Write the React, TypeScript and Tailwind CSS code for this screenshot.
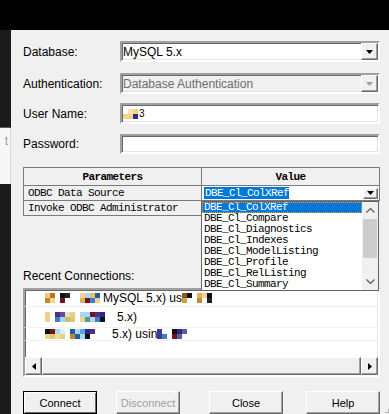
const mono = "font-['Liberation_Mono',monospace] text-[11px] tracking-[-0.6px]";

const sunken =
  "border-2 border-t-[#a0a0a0] border-l-[#a0a0a0] border-r-white border-b-white shadow-[inset_1px_1px_0_#696969,inset_-1px_-1px_0_#e3e3e3]";

const raised =
  "border border-t-white border-l-white border-r-[#696969] border-b-[#696969] shadow-[inset_-1px_-1px_0_#a0a0a0] bg-[#f0f0f0]";

function Triangle({ color = "#000", dir = "down" }: { color?: string; dir?: "down" | "left" | "right" }) {
  if (dir === "left")
    return (
      <svg width="4" height="7" viewBox="0 0 4 7">
        <path d="M4 0 L0 3.5 L4 7 Z" fill={color} />
      </svg>
    );
  if (dir === "right")
    return (
      <svg width="4" height="7" viewBox="0 0 4 7">
        <path d="M0 0 L4 3.5 L0 7 Z" fill={color} />
      </svg>
    );
  return (
    <svg width="7" height="4" viewBox="0 0 7 4">
      <path d="M0 0 H7 L3.5 4 Z" fill={color} />
    </svg>
  );
}

function ComboButton({ disabled }: { disabled?: boolean }) {
  return (
    <div className={`flex h-[17px] w-[17px] items-center justify-center ${raised}`}>
      <Triangle color={disabled ? "#a0a0a0" : "#000"} />
    </div>
  );
}

function Field({ label, children, className }: { label: string; children?: React.ReactNode; className: string }) {
  return (
    <div className={`flex items-center ${className}`}>
      <div className="w-[97px] shrink-0">{label}</div>
      {children}
    </div>
  );
}

// pixelated (blurred out) part of a connection name
function Mosaic({ cols }: { cols: string[][] }) {
  return (
    <span className="inline-flex">
      {cols.map((c, i) => (
        <span key={i} className="flex w-[5px] flex-col">
          {c.map((color, j) => (
            <span key={j} className="h-[5px] w-[5px]" style={{ background: color }} />
          ))}
        </span>
      ))}
    </span>
  );
}

const W = "#ffffff";

const row1a = [
  ["#f4c77c", "#c8852c"], ["#b7771f", "#f5d596"], [W, W], ["#111", "#7a1020"], ["#222", W], [W, W], [W, W],
  ["#f4d28a", "#e0b060"], ["#a8d8f0", "#7a1020"], ["#e2c46a", "#3a7fc8"], ["#1d5fa8", "#f2d18a"], [W, W],
];
const row1b = [["#8a5a2a", "#d3a13c"], ["#111", W], [W, W], ["#e1b060", "#c88a3a"], ["#f4d28a", W], ["#111", "#222"]];
const row2 = [
  ["#f2d18a", "#f2d18a"], [W, W], ["#5b2a86", "#3a7fc8"], ["#6a4a9a", "#a8d8f0"], ["#e8e0c0", "#c8c070"], ["#e8d080", "#d8c878"],
  [W, W], ["#a8d8f0", "#f4d28a"], ["#a8d8f0", "#4aa0a0"], ["#7a1020", "#a8d8f0"], ["#5b2a86", "#3a7fc8"], ["#2a2a8a", "#111"],
  [W, W], [W, W],
];
const row3 = [
  ["#111", "#f4d28a"], ["#7a1020", "#e2c46a"], ["#a8d8f0", "#f2e0a0"], ["#d8f0f8", "#e0d090"], [W, W], ["#1d5fa8", "#c8852c"],
  ["#a8d8f0", "#1d5fa8"], ["#5aa8d8", "#a8d8f0"], ["#2a2a8a", "#111"], ["#5b2a86", W], [W, W], [W, W], [W, W],
];
const row3b = [["#3a3a9a", "#3a3a9a"], [W, "#3a7fc8"], [W, W], ["#111", "#7a1020"], ["#2a2a8a", "#5b5ba0"], ["#5b5ba0", W]];

const dsn = [
  "DBE_Cl_ColXRef",
  "DBE_Cl_Compare",
  "DBE_Cl_Diagnostics",
  "DBE_Cl_Indexes",
  "DBE_Cl_ModelListing",
  "DBE_Cl_Profile",
  "DBE_Cl_RelListing",
  "DBE_Cl_Summary",
];

export default function App() {
  return (
    <div className="relative h-[414px] w-[389px] overflow-hidden bg-black font-['Liberation_Sans',Arial,sans-serif] text-[12px] leading-[14px] text-black">
      <div className="h-[30px] bg-black" />
      <div className="flex h-[384px]">
        {/* window behind the dialog */}
        <div className="flex w-[11px] shrink-0 flex-col">
          <div className="h-[97px] bg-[#1b1b1b]" />
          <div className="h-px bg-[#5a5a5a]" />
          <div className="h-[56px] overflow-hidden border-r border-[#d8d8d8] bg-[#f7f7f7] pt-[6px] pr-[2px] text-right text-[#9a9a9a]">
            t
          </div>
          <div className="flex-1 bg-[#1b1b1b]" />
        </div>

        <div className="relative flex-1 bg-[#f0f0f0] pl-[12px] pr-[10px]">
          <Field label="Database:" className="mt-[11px]">
            <div className={`flex h-[21px] flex-1 items-center bg-white pl-[1px] ${sunken}`}>
              <span className="flex-1">MySQL 5.x</span>
              <ComboButton />
            </div>
          </Field>
          <Field label="Authentication:" className="mt-[11px]">
            <div className={`flex h-[21px] flex-1 items-center bg-[#f0f0f0] pl-[1px] text-[#6d6d6d] ${sunken}`}>
              <span className="flex-1">Database Authentication</span>
              <ComboButton disabled />
            </div>
          </Field>
          <Field label="User Name:" className="mt-[9px]">
            <div className={`flex h-[21px] flex-1 items-center bg-white pl-[1px] ${sunken}`}>
              <Mosaic cols={[[W, "#f4d28a"], ["#fbe3a8", "#f4d28a"], ["#f4d28a", "#2a2a8a"]]} />
              <span className="ml-[1px] text-[10px]">3</span>
            </div>
          </Field>
          <Field label="Password:" className="mt-[10px]">
            <div className={`h-[20px] flex-1 bg-white ${sunken}`} />
          </Field>

          {/* parameter grid */}
          <div className={`mt-[13px] w-[357px] border-t border-l border-[#7a7a7a] ${mono}`}>
            <div className="flex h-[18px] font-bold">
              <div className="flex w-[178px] items-center justify-center border-r border-b border-[#7a7a7a]">Parameters</div>
              <div className="flex flex-1 items-center justify-center border-r border-b border-[#7a7a7a]">Value</div>
            </div>
            <div className="flex h-[15px]">
              <div className="flex w-[178px] items-center border-r border-b border-[#7a7a7a] pl-[4px]">ODBC Data Source</div>
              <div className="flex flex-1 items-center border-r border-b border-[#7a7a7a] bg-white pl-[2px] pr-[1px]">
                <span className="flex-1">
                  <span className="bg-[#0078d7] pl-px text-white">DBE_Cl_ColXRef</span>
                </span>
                <div className={`flex h-[11px] w-[15px] items-center justify-center ${raised}`}>
                  <Triangle />
                </div>
              </div>
            </div>
            <div className="flex h-[15px]">
              <div className="flex w-[178px] items-center border-r border-b border-[#7a7a7a] pl-[4px]">Invoke ODBC Administrator</div>
            </div>
          </div>

          {/* open dropdown list */}
          <div className={`absolute left-[190px] top-[171px] z-10 flex h-[90px] w-[178px] border border-[#646464] bg-white ${mono} leading-[11px]`}>
            <div className="flex-1">
              {dsn.map((d, i) => (
                <div
                  key={d}
                  className={
                    i === 0
                      ? "h-[11px] bg-[#0078d7] pl-[2px] text-white outline-1 outline-offset-[-1px] outline-dotted outline-[#f0a030]"
                      : "h-[11px] pl-[2px]"
                  }
                >
                  {d}
                </div>
              ))}
            </div>
            <div className="flex w-[16px] flex-col bg-[#f0f0f0]">
              <div className="flex h-[17px] items-center justify-center">
                <svg width="9" height="5" viewBox="0 0 9 5">
                  <path d="M0.5 4.5 L4.5 0.5 L8.5 4.5" fill="none" stroke="#606060" strokeWidth="1.3" />
                </svg>
              </div>
              <div className="mx-px h-[39px] bg-[#cdcdcd]" />
              <div className="flex-1" />
              <div className="flex h-[17px] items-center justify-center">
                <svg width="9" height="5" viewBox="0 0 9 5">
                  <path d="M0.5 0.5 L4.5 4.5 L8.5 0.5" fill="none" stroke="#606060" strokeWidth="1.3" />
                </svg>
              </div>
            </div>
          </div>

          <div className="mt-[53px]">Recent Connections:</div>

          <div className={`mt-[5px] flex h-[89px] w-[357px] flex-col bg-white ${sunken}`}>
            <div className="flex-1">
              <div className="flex h-[17px] items-center border-b border-[#f2f2f2] pl-[20px]">
                <Mosaic cols={row1a} />
                <span className="-ml-[2px]">MySQL 5.x) us</span>
                <Mosaic cols={row1b} />
              </div>
              <div className="flex h-[21px] items-center border-b border-[#f2f2f2] pl-[20px]">
                <Mosaic cols={row2} />
                <span className="ml-[2px]">5.x)</span>
              </div>
              <div className="flex h-[13px] items-center border-b border-[#f2f2f2] pl-[20px]">
                <Mosaic cols={row3} />
                <span className="ml-[2px]">5.x) usin</span>
                <Mosaic cols={row3b} />
              </div>
            </div>
            <div className="flex h-[18px] bg-[#f0f0f0]">
              <div className={`flex w-[17px] items-center justify-center ${raised}`}>
                <Triangle dir="left" />
              </div>
              <div className={`flex-1 ${raised}`} />
              <div className={`flex w-[17px] items-center justify-center ${raised}`}>
                <Triangle dir="right" />
              </div>
            </div>
          </div>

          <div className="mt-[14px] flex text-[11px]">
            <button className="h-[23px] w-[74px] border border-black bg-[#f0f0f0] shadow-[inset_1px_1px_0_#fff,inset_-1px_-1px_0_#696969]">
              Connect
            </button>
            <button className={`ml-[19px] h-[23px] w-[64px] text-[#a0a0a0] ${raised}`}>Disconnect</button>
            <button className={`ml-[29px] h-[23px] w-[74px] ${raised}`}>Close</button>
            <button className={`ml-[23px] h-[23px] w-[74px] ${raised}`}>Help</button>
          </div>

          <div className="absolute right-[1px] bottom-[1px] h-[4px] w-[4px] border-r border-b border-[#b0b0b0]" />
        </div>
      </div>
    </div>
  );
}
